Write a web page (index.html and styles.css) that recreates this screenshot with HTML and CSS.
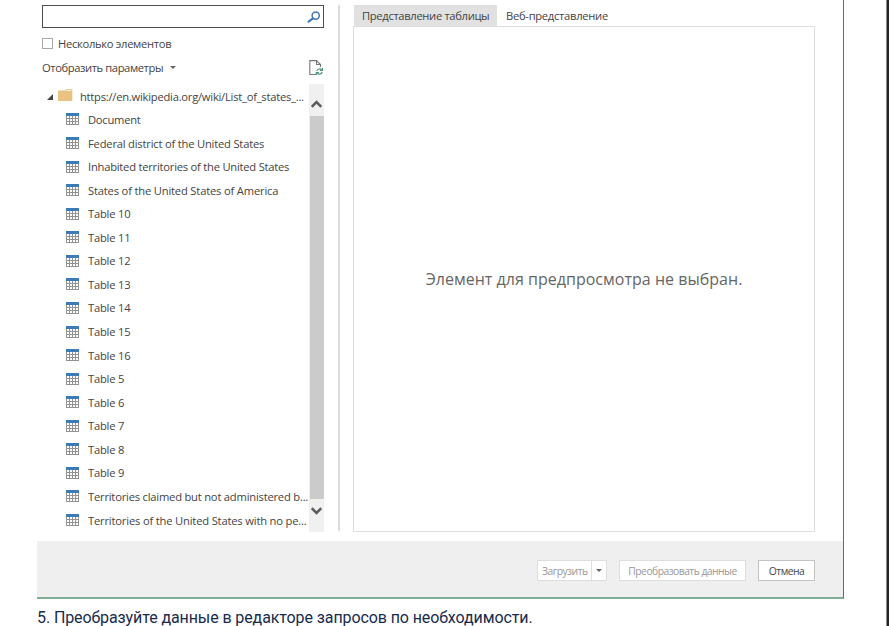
FILE: index.html
```html
<!DOCTYPE html>
<html lang="ru">
<head>
<meta charset="utf-8">
<title>Навигатор</title>
<link rel="stylesheet" href="styles.css">
</head>
<body>
<svg width="0" height="0" class="defs">
  <symbol id="table" viewBox="0 0 13 12">
    <rect width="13" height="12" fill="#929292"/>
    <rect width="13" height="3" fill="#3d7ab8"/>
    <path fill="#fff" d="M1 3h2v2H1zM4 3h2v2H4zM7 3h2v2H7zM10 3h2v2h-2zM1 6h2v2H1zM4 6h2v2H4zM7 6h2v2H7zM10 6h2v2h-2zM1 9h2v2H1zM4 9h2v2H4zM7 9h2v2H7zM10 9h2v2h-2z"/>
  </symbol>
</svg>
<div class="page">
  <div class="dialog">
    <div class="body">
      <section class="nav">
        <div class="search">
          <svg width="14" height="13" viewBox="0 0 14 13"><circle cx="8.7" cy="4.6" r="3.6" fill="none" stroke="#4479b5" stroke-width="1.5"/><path d="M6 7.3L1.6 10.6" stroke="#4479b5" stroke-width="2.2" stroke-linecap="round"/></svg>
        </div>
        <label class="multi"><span class="box"></span><span class="t-multi">Несколько элементов</span></label>
        <div class="options">
          <span class="t-opt">Отобразить параметры</span><span class="caret"></span>
          <svg class="refresh" width="15" height="16" viewBox="0 0 15 16"><path d="M7 14.5H.8V.6H7.5L11.5 4.5V7M7.5.6V4.5H11.5" fill="none" stroke="#777" stroke-width="1.1"/><path d="M7.6 10.8C8.5 8.8 11 8.4 12.6 9.8M13.4 8V10.5H10.8M13.2 12C12.5 14.3 9.6 14.9 8.2 13.2M7.3 15V12.5H9.9" fill="none" stroke="#4a9a76" stroke-width="1.2"/></svg>
        </div>
        <div class="listing">
          <div class="tree">
            <div class="row root">
              <svg class="expander" width="6" height="6" viewBox="0 0 6 6"><path d="M6 0V6H0z" fill="#444"/></svg>
              <svg class="folder" width="15" height="12" viewBox="0 0 15 12"><path d="M0 1.5H7L8.3 0H14.3V12H0z" fill="#eac282"/><path d="M8.2 1.4H13.4" stroke="#fff" stroke-width=".9"/></svg>
              <span class="t-url">https://en.wikipedia.org/wiki/List_of_states_...</span>
            </div>
            <div class="row"><svg><use href="#table"/></svg><span class="t-doc">Document</span></div>
            <div class="row"><svg><use href="#table"/></svg><span class="t-fed">Federal district of the United States</span></div>
            <div class="row"><svg><use href="#table"/></svg><span class="t-inh">Inhabited territories of the United States</span></div>
            <div class="row"><svg><use href="#table"/></svg><span class="t-sta">States of the United States of America</span></div>
            <div class="row"><svg><use href="#table"/></svg><span class="t-tab">Table 10</span></div>
            <div class="row"><svg><use href="#table"/></svg><span class="t-tab">Table 11</span></div>
            <div class="row"><svg><use href="#table"/></svg><span class="t-tab">Table 12</span></div>
            <div class="row"><svg><use href="#table"/></svg><span class="t-tab">Table 13</span></div>
            <div class="row"><svg><use href="#table"/></svg><span class="t-tab">Table 14</span></div>
            <div class="row"><svg><use href="#table"/></svg><span class="t-tab">Table 15</span></div>
            <div class="row"><svg><use href="#table"/></svg><span class="t-tab">Table 16</span></div>
            <div class="row"><svg><use href="#table"/></svg><span class="t-tab">Table 5</span></div>
            <div class="row"><svg><use href="#table"/></svg><span class="t-tab">Table 6</span></div>
            <div class="row"><svg><use href="#table"/></svg><span class="t-tab">Table 7</span></div>
            <div class="row"><svg><use href="#table"/></svg><span class="t-tab">Table 8</span></div>
            <div class="row"><svg><use href="#table"/></svg><span class="t-tab">Table 9</span></div>
            <div class="row"><svg><use href="#table"/></svg><span class="t-cla">Territories claimed but not administered b...</span></div>
            <div class="row"><svg><use href="#table"/></svg><span class="t-ter">Territories of the United States with no pe...</span></div>
          </div>
          <div class="scrollbar">
            <svg class="up" width="11" height="8" viewBox="0 0 11 8"><path d="M.7 6.8L5.5 2L10.3 6.8" fill="none" stroke="#5c5c5c" stroke-width="2.6"/></svg>
            <div class="thumb"></div>
            <svg class="down" width="11" height="8" viewBox="0 0 11 8"><path d="M.7 1.2L5.5 6L10.3 1.2" fill="none" stroke="#5c5c5c" stroke-width="2.6"/></svg>
          </div>
        </div>
      </section>
      <div class="divider"></div>
      <section class="preview">
        <div class="tabs"><div class="tab active"><span class="t-tv">Представление таблицы</span></div><div class="tab"><span class="t-web">Веб-представление</span></div></div>
        <div class="pane"><span class="t-empty">Элемент для предпросмотра не выбран.</span></div>
      </section>
    </div>
    <footer class="footer">
      <div class="btn split"><span class="load"><span class="t-load">Загрузить</span></span><span class="drop"><span class="caret"></span></span></div>
      <div class="btn transform"><span class="t-tr">Преобразовать данные</span></div>
      <div class="btn cancel"><span class="t-can">Отмена</span></div>
    </footer>
  </div>
  <p class="step">5. Преобразуйте данные в редакторе запросов по необходимости.</p>
</div>
</body>
</html>
```
FILE: styles.css
```css
* { box-sizing: border-box; }
body { margin: 0; background: #fff; overflow: hidden; }
svg { display: block; flex: none; }
.defs { position: absolute; }
.page {
  height: 626px;
  padding-left: 37px;
  border-right: 2px solid #242424;
  box-shadow: inset -1px 0 #8a8a8a;
  overflow: hidden;
}
.dialog {
  width: 807px;
  height: 599px;
  border-right: 1px solid #338460;
  border-bottom: 2px solid #7fae95;
  display: flex;
  flex-direction: column;
  font: 11.2px/16px "Open Sans", sans-serif;
  color: #444;
  white-space: nowrap;
}
.body { height: 541px; padding: 5px 0 0 5px; display: flex; }
.nav { width: 282px; }
.search {
  height: 23px;
  border: 1px solid #4c4c4c;
  display: flex;
  justify-content: flex-end;
  padding: 5px 2px 0 0;
}
.multi { display: flex; align-items: center; height: 16px; margin-top: 8px; }
.box { width: 11px; height: 11px; border: 1px solid #aaa; margin: -2px 5px 0 0; }
.options { display: flex; align-items: center; height: 16px; margin-top: 8px; }
.caret { border: 3px solid transparent; border-top-color: #666; border-bottom: 0; }
.options .caret { margin: -2px 0 0 7px; }
.refresh { margin-left: auto; }
.listing { display: flex; margin-top: 8px; height: 448px; }
.tree { width: 267px; }
.row { height: 23.57px; display: flex; align-items: center; padding-left: 24px; }
.row svg { width: 13px; height: 12px; margin: -1px 9px 0 0; }
.root { padding-left: 5px; height: 24.2px; }
.row .expander { width: 6px; height: 6px; margin: 2px 5px 0 0; }
.row .folder { width: 15px; margin: -2px 7px 0 0; }
.root span { padding-top: 1px; }
.scrollbar { width: 15px; background: #f0f0f0; display: flex; flex-direction: column; align-items: center; }
.up { margin: 16px 0 8px; }
.thumb { width: 14px; height: 383px; background: #cbcbcb; }
.down { margin-top: 8px; }
.divider { width: 2px; height: 526px; margin: 0 13px 0 14px; background: #dcdcdc; }
.preview { width: 462px; }
.tabs { display: flex; height: 21px; padding-left: 1px; }
.tab { padding: 3px 9px 0; }
.active { width: 143px; background: #e1e1e1; padding-left: 8px; }
.pane {
  height: 506px;
  border: 1px solid #dedede;
  display: flex;
  align-items: center;
  justify-content: center;
  font-size: 16px;
  color: #666;
}
.footer { flex: 1; background: #efefef; display: flex; padding: 19px 28px 0 0; justify-content: flex-end; }
.btn {
  height: 21px;
  border: 1px solid #dedede;
  background: #fff;
  color: #999;
  font-size: 10.3px;
  display: flex;
  align-items: center;
  justify-content: center;
}
.split { width: 70px; }
.load { width: 53px; padding-left: 4px; }
.drop { flex: 1; height: 19px; border-left: 1px solid #dedede; display: flex; align-items: center; justify-content: center; }
.transform { width: 127px; margin: 0 12px; }
.cancel { width: 57px; border-color: #c3c3c3; color: #444; }
.step { margin: 8px 0 0; font: 16px/22px Roboto, sans-serif; color: #172b4d; letter-spacing: -.1px; }

/* Tracking per label */
.t-multi { letter-spacing: -.3px; }
.t-opt { letter-spacing: -.4px; }
.t-url { letter-spacing: -.24px; }
.t-doc { letter-spacing: -.25px; }
.t-fed { letter-spacing: -.2px; }
.t-inh { letter-spacing: -.23px; }
.t-sta { letter-spacing: -.18px; }
.t-tab { letter-spacing: -.2px; }
.t-cla { letter-spacing: -.21px; }
.t-ter { letter-spacing: -.18px; }
.t-tv { letter-spacing: -.33px; }
.t-web { letter-spacing: -.28px; }
.t-load { letter-spacing: -.5px; }
.t-tr { letter-spacing: -.52px; }
.t-can { letter-spacing: -.5px; }
.t-empty { letter-spacing: .02px; }
```
